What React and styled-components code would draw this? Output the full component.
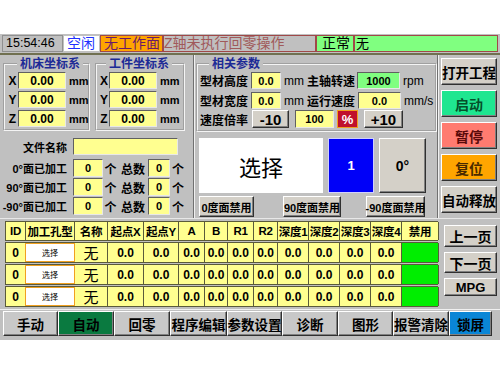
import React from 'react';
import styled, { createGlobalStyle, css } from 'styled-components';

const FONT = `"Liberation Sans", "Noto Sans CJK SC", sans-serif`;

const Global = createGlobalStyle`
  html, body { margin: 0; padding: 0; background: #ffffff; }
  body { font-family: ${FONT}; color: #000; }
  * { box-sizing: border-box; }
`;

const raised = css`
  border: 1px solid;
  border-color: #ffffff #303030 #303030 #ffffff;
  box-shadow: inset -1px -1px 0 #808080;
`;

const sunken = css`
  border: 1px solid;
  border-color: #606060 #e8e8e8 #e8e8e8 #606060;
`;

const Screen = styled.div`
  margin-top: 34px;
  width: 500px;
  height: 306px;
  background: #c0c0c0;
  display: flex;
  flex-direction: column;
  overflow: hidden;
`;

/* ---------- status bar ---------- */
const StatusArea = styled.div`
  height: 21px;
  padding-top: 1px;
  border-bottom: 2px solid;
  border-color: #707050;
`;
const StatusBar = styled.div`
  display: flex;
  height: 17px;
  margin: 0 2px;
`;
const StatusCell = styled.div`
  width: ${p => p.$w}px;
  flex: ${p => (p.$grow ? 1 : 'none')};
  background: ${p => p.$bg};
  color: ${p => p.$color};
  border: 1px solid ${p => p.$border || '#a04848'};
  font-size: ${p => p.$fs || 14}px;
  line-height: 15px;
  padding-left: ${p => p.$pl ?? 3}px;
  white-space: nowrap;
  overflow: hidden;
  display: flex;
  align-items: center;
`;

/* ---------- main area ---------- */
const Main = styled.div`
  height: 163px;
  display: flex;
`;
const LeftPanel = styled.div`
  width: 194px;
  border-right: 1px solid #707070;
  display: flex;
  flex-direction: column;
`;
const GroupRow = styled.div`
  display: flex;
  align-items: flex-start;
`;
const Group = styled.fieldset`
  margin: 2px 0 0 ${p => p.$ml}px;
  width: ${p => p.$w}px;
  min-width: 0;
  padding: 1px 2px 2px 2px;
  border: 2px groove #f4f4f4;
`;
const Legend = styled.legend`
  margin-left: ${p => p.$ml}px;
  padding: 0 3px;
  font-weight: bold;
  font-size: 12px;
  line-height: 14px;
  color: #1c2a96;
`;
const CoordGrid = styled.div`
  display: grid;
  grid-template-columns: ${p => p.$lw}px 48px auto;
  row-gap: 2px;
  align-items: center;
`;
const AxisLabel = styled.span`
  font-weight: bold;
  font-size: 12px;
  text-align: center;
`;
const YBox = styled.div`
  ${sunken};
  background: #ffff90;
  height: ${p => p.$h || 17}px;
  width: ${p => (p.$w ? `${p.$w}px` : 'auto')};
  font-weight: bold;
  font-size: ${p => p.$fs || 12}px;
  display: flex;
  align-items: center;
  justify-content: center;
  flex: none;
`;
const Unit = styled.span`
  font-weight: bold;
  font-size: 11px;
  padding-left: 3px;
  white-space: nowrap;
`;

const FileArea = styled.div`
  padding-top: 7px;
  display: flex;
  flex-direction: column;
`;
const FileNameRow = styled.div`
  display: flex;
  align-items: center;
  height: 17px;
  margin-bottom: 4px;
`;
const FileGrid = styled.div`
  display: grid;
  grid-template-columns: 73px 30px 15px 30px 22px 16px;
  grid-auto-rows: 18px;
  row-gap: 1px;
  align-items: center;
`;
const FLabel = styled.span`
  width: ${p => (p.$w ? `${p.$w}px` : 'auto')};
  font-weight: bold;
  font-size: 11px;
  text-align: right;
  padding-right: 6px;
  white-space: nowrap;
`;
const FText = styled.span`
  font-weight: bold;
  font-size: 12px;
  text-align: center;
  white-space: nowrap;
`;

/* middle */
const MidPanel = styled.div`
  width: 244px;
  border-left: 1px solid #f0f0f0;
  border-right: 1px solid #707070;
  display: flex;
  flex-direction: column;
`;
const ParamRow = styled.div`
  display: flex;
  align-items: center;
  height: ${p => p.$h || 17}px;
  margin-top: ${p => p.$mt || 0}px;
`;
const PLabel = styled.span`
  width: ${p => p.$w}px;
  font-size: 12px;
  font-weight: bold;
  white-space: nowrap;
  flex: none;
`;
const PUnit = styled.span`
  width: ${p => p.$w}px;
  font-size: 12px;
  padding-left: 3px;
  white-space: nowrap;
  flex: none;
`;
const GBox = styled(YBox)`
  background: #80ff80;
`;
const StepButton = styled.div`
  ${raised};
  background: #d4d0c8;
  width: ${p => p.$w}px;
  height: 18px;
  margin-left: ${p => p.$ml}px;
  font-weight: bold;
  font-size: 15px;
  display: flex;
  align-items: center;
  justify-content: center;
  flex: none;
`;
const PctBox = styled.div`
  width: 21px;
  height: 18px;
  margin-left: 3px;
  background: #c0102c;
  border: 1px solid #f0a020;
  color: #fff;
  font-weight: bold;
  font-size: 13px;
  display: flex;
  align-items: center;
  justify-content: center;
  flex: none;
`;
const SelectRow = styled.div`
  display: flex;
  margin-top: 6px;
  height: 55px;
`;
const SelectBox = styled.div`
  width: 124px;
  margin-left: 4px;
  background: #ffffff;
  font-family: "Noto Sans CJK SC", sans-serif;
  font-size: 22px;
  display: flex;
  align-items: center;
  justify-content: center;
`;
const BlueBox = styled.div`
  width: 46px;
  margin-left: 5px;
  background: #0000f8;
  border: 1px solid #d0d0ff;
  color: #fff;
  font-weight: bold;
  font-size: 13px;
  display: flex;
  align-items: center;
  justify-content: center;
`;
const AngleButton = styled.div`
  ${raised};
  background: #d4d0c8;
  width: 47px;
  margin-left: 5px;
  font-weight: bold;
  font-size: 14px;
  display: flex;
  align-items: center;
  justify-content: center;
`;
const FaceRow = styled.div`
  display: flex;
  margin-top: 3px;
  height: 21px;
`;
const FaceButton = styled.div`
  ${raised};
  background: #d4d0c8;
  width: ${p => p.$w}px;
  margin-left: ${p => p.$ml}px;
  font-weight: bold;
  font-size: 11px;
  display: flex;
  align-items: center;
  justify-content: center;
  white-space: nowrap;
`;

/* right column */
const RightCol = styled.div`
  flex: 1;
  border-left: 1px solid #f0f0f0;
  padding: 3px 0 0 2px;
  display: flex;
  flex-direction: column;
  gap: 5px;
`;
const SideButton = styled.div`
  ${raised};
  width: 56px;
  height: 27px;
  background: ${p => p.$bg || '#d4d0c8'};
  color: ${p => p.$color || '#000'};
  font-weight: bold;
  font-size: ${p => p.$fs || 13.5}px;
  display: flex;
  align-items: center;
  justify-content: center;
  white-space: nowrap;
`;

/* ---------- lower ---------- */
const Lower = styled.div`
  height: 89px;
  display: flex;
  border-top: 1px solid #e8e8e8;
`;
const TableWrap = styled.div`
  width: 438px;
  padding: 2px 0 0 5px;
  display: flex;
  flex-direction: column;
  gap: 1px;
`;
const TRow = styled.div`
  display: grid;
  grid-template-columns: 20px 49px 33px 36px 35px 26px 23px 26px 24px 31px 31px 31px 31px 37px;
  height: ${p => p.$h}px;
  border-top: 1px solid #5a5a3a;
  border-bottom: 1px solid #5a5a3a;
  border-left: 1px solid #5a5a3a;
`;
const Cell = styled.div`
  background: ${p => (p.$kind === 'green' ? '#00ee00' : p.$kind === 'select' ? '#ffffff' : '#ffff90')};
  border-right: 1px solid #5a5a3a;
  ${p => p.$kind === 'select' && css`border: 1px solid #f0a020; margin-left: -1px;`}
  font-weight: ${p => (p.$kind === 'name' || p.$kind === 'select' ? 'normal' : 'bold')};
  font-size: ${p => (p.$kind === 'head' ? 11.5 : p.$kind === 'name' ? 15 : p.$kind === 'select' ? 8 : 12)}px;
  font-family: ${p => (p.$kind === 'name' || p.$kind === 'select' ? '"Noto Sans CJK SC", sans-serif' : FONT)};
  display: flex;
  align-items: center;
  justify-content: center;
  white-space: nowrap;
  overflow: hidden;
  letter-spacing: ${p => (p.$kind === 'head' ? '-0.3px' : '0')};
`;
const LowerRight = styled.div`
  flex: 1;
  padding: 6px 0 0 6px;
  display: flex;
  flex-direction: column;
  gap: 5px;
`;
const PageButton = styled.div`
  ${raised};
  background: #d4d0c8;
  width: 53px;
  height: ${p => p.$h}px;
  font-weight: bold;
  font-size: ${p => p.$fs || 14}px;
  display: flex;
  align-items: center;
  justify-content: center;
`;

/* ---------- bottom bar ---------- */
const BottomBar = styled.div`
  margin-top: 2px;
  border-top: 1px solid #f0f0f0;
  padding: 1px 0 0 3px;
  display: flex;
`;
const NavButton = styled.div`
  ${raised};
  width: ${p => p.$w}px;
  height: 25px;
  background: ${p => p.$bg || '#c8c8c8'};
  font-weight: bold;
  font-size: 13.5px;
  display: flex;
  align-items: center;
  justify-content: center;
  white-space: nowrap;
`;

const headers = ['ID', '加工孔型', '名称', '起点X', '起点Y', 'A', 'B', 'R1', 'R2', '深度1', '深度2', '深度3', '深度4', '禁用'];

const navs = [
  ['手动', 55], ['自动', 56, '#0a7a40'], ['回零', 56], ['程序编辑', 57], ['参数设置', 55],
  ['诊断', 56], ['图形', 55], ['报警清除', 56], ['锁屏', 43, '#0a86d6'],
];

function DataRow() {
  return (
    <TRow $h={21}>
      <Cell>0</Cell>
      <Cell $kind="select">选择</Cell>
      <Cell $kind="name">无</Cell>
      {Array.from({ length: 10 }).map((_, i) => (
        <Cell key={i}>0.0</Cell>
      ))}
      <Cell $kind="green" />
    </TRow>
  );
}

function CoordGroup({ title, ml, w, lw, legendMl }) {
  return (
    <Group $ml={ml} $w={w}>
      <Legend $ml={legendMl}>{title}</Legend>
      <CoordGrid $lw={lw}>
        {['X', 'Y', 'Z'].map(a => (
          <React.Fragment key={a}>
            <AxisLabel>{a}</AxisLabel>
            <YBox>0.00</YBox>
            <Unit>mm</Unit>
          </React.Fragment>
        ))}
      </CoordGrid>
    </Group>
  );
}

export default function App() {
  return (
    <>
      <Global />
      <Screen>
        <StatusArea>
          <StatusBar>
            <StatusCell $w={61} $bg="#c0c0c0" $color="#000" $border="#909090" $fs={12.5}>15:54:46</StatusCell>
            <StatusCell $w={37} $bg="#ffffff" $color="#2030ff" $border="#c0c0c0">空闲</StatusCell>
            <StatusCell $w={63} $bg="#ffa500" $color="#6a1a6a">无工作面</StatusCell>
            <StatusCell $w={153} $bg="#c0c0c0" $color="#a05a5a" $pl={0}>Z轴未执行回零操作</StatusCell>
            <StatusCell $w={38} $bg="#80ff80" $color="#000" $pl={5}>正常</StatusCell>
            <StatusCell $grow $bg="#80ff80" $color="#000" $pl={1} $fs={13}>无</StatusCell>
          </StatusBar>
        </StatusArea>

        <Main>
          <LeftPanel>
            <GroupRow>
              <CoordGroup title="机床坐标系" ml={3} w={87} lw={11} legendMl={10} />
              <CoordGroup title="工件坐标系" ml={5} w={90} lw={10} legendMl={7} />
            </GroupRow>
            <FileArea>
              <FileNameRow>
                <FLabel $w={73}>文件名称</FLabel>
                <YBox $w={105} />
              </FileNameRow>
              <FileGrid>
                {['0°面已加工', '90°面已加工', '-90°面已加工'].map(l => (
                  <React.Fragment key={l}>
                    <FLabel>{l}</FLabel>
                    <YBox $h={18} $fs={11}>0</YBox>
                    <FText>个</FText>
                    <FText>总数</FText>
                    <YBox $h={18} $fs={11}>0</YBox>
                    <FText>个</FText>
                  </React.Fragment>
                ))}
              </FileGrid>
            </FileArea>
          </LeftPanel>

          <MidPanel>
            <Group $ml={1} $w={241}>
              <Legend $ml={9}>相关参数</Legend>
              <ParamRow>
                <PLabel $w={51}>型材高度</PLabel>
                <YBox $w={30} $fs={11}>0.0</YBox>
                <PUnit $w={26}>mm</PUnit>
                <PLabel $w={50}>主轴转速</PLabel>
                <GBox $w={43} $fs={11}>1000</GBox>
                <PUnit>rpm</PUnit>
              </ParamRow>
              <ParamRow $mt={3}>
                <PLabel $w={51}>型材宽度</PLabel>
                <YBox $w={30} $fs={11}>0.0</YBox>
                <PUnit $w={26}>mm</PUnit>
                <PLabel $w={51}>运行速度</PLabel>
                <YBox $w={43} $fs={11}>0.0</YBox>
                <PUnit>mm/s</PUnit>
              </ParamRow>
              <ParamRow $mt={1} $h={18}>
                <PLabel $w={51}>速度倍率</PLabel>
                <StepButton $w={37} $ml={1}>-10</StepButton>
                <YBox $w={39} $h={18} $fs={11} style={{ marginLeft: 6 }}>100</YBox>
                <PctBox>%</PctBox>
                <StepButton $w={39} $ml={6}>+10</StepButton>
              </ParamRow>
            </Group>
            <SelectRow>
              <SelectBox>选择</SelectBox>
              <BlueBox>1</BlueBox>
              <AngleButton>0°</AngleButton>
            </SelectRow>
            <FaceRow>
              <FaceButton $w={55} $ml={4}>0度面禁用</FaceButton>
              <FaceButton $w={58} $ml={29}>90度面禁用</FaceButton>
              <FaceButton $w={59} $ml={25}>-90度面禁用</FaceButton>
            </FaceRow>
          </MidPanel>

          <RightCol>
            <SideButton>打开工程</SideButton>
            <SideButton $bg="#1fe690" $color="#05502a" $fs={14}>启动</SideButton>
            <SideButton $bg="#ff7b70" $color="#5a0a0a" $fs={14}>暂停</SideButton>
            <SideButton $bg="#ffa500" $color="#4a2a00" $fs={14}>复位</SideButton>
            <SideButton>自动释放</SideButton>
          </RightCol>
        </Main>

        <Lower>
          <TableWrap>
            <TRow $h={20}>
              {headers.map(h => (
                <Cell key={h} $kind="head">{h}</Cell>
              ))}
            </TRow>
            <DataRow />
            <DataRow />
            <DataRow />
          </TableWrap>
          <LowerRight>
            <PageButton $h={22}>上一页</PageButton>
            <PageButton $h={21}>下一页</PageButton>
            <PageButton $h={18} $fs={13}>MPG</PageButton>
          </LowerRight>
        </Lower>

        <BottomBar>
          {navs.map(([t, w, bg]) => (
            <NavButton key={t} $w={w} $bg={bg}>{t}</NavButton>
          ))}
        </BottomBar>
      </Screen>
    </>
  );
}
